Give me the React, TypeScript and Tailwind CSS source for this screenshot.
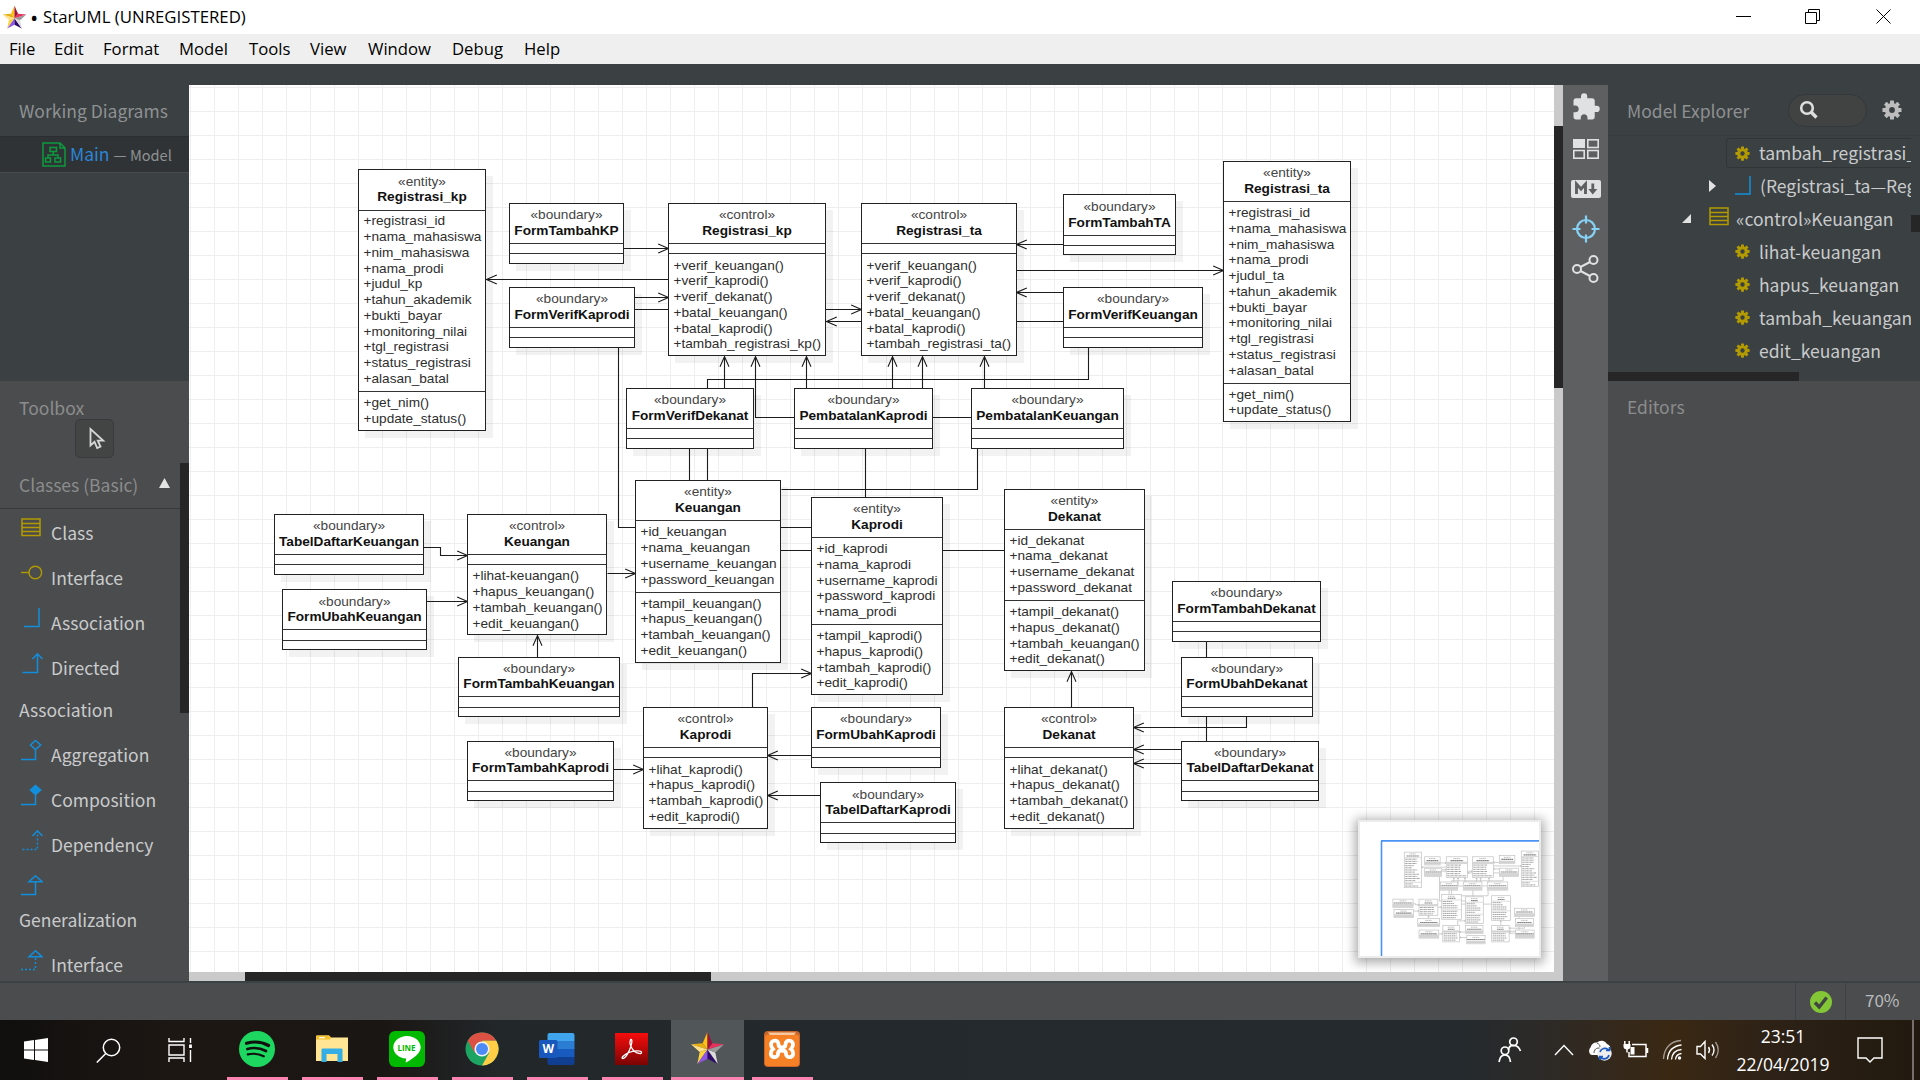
import React from "react";
import { MdExtension } from "react-icons/md";

type Box = {
  kind: string;
  name: string;
  x: number;
  y: number;
  r: number;
  b: number;
  s1: number;
  s2: number;
  head: [number, number];
  attrs?: string[];
  attrBase?: number;
  ops?: string[];
  opBase?: number;
};

type Edge = { pts: number[]; arrow?: boolean };

const OX = 189;
const OY = 85;
const PITCH = 15.75;
const ASCENT = 12;

const REG_ATTRS = (judul: string) => [
  "registrasi_id", "nama_mahasiswa", "nim_mahasiswa", "nama_prodi", judul, "tahun_akademik",
  "bukti_bayar", "monitoring_nilai", "tgl_registrasi", "status_registrasi", "alasan_batal",
];
const REG_OPS = (last: string) => [
  "verif_keuangan()", "verif_kaprodi()", "verif_dekanat()", "batal_keuangan()", "batal_kaprodi()", last,
];

const boundary = (
  name: string, x: number, r: number, y: number, s1: number, s2: number, b: number, head: [number, number],
): Box => ({ kind: "boundary", name, x, y, r, b, s1, s2, head });

const BOXES: Box[] = [
  { kind: "entity", name: "Registrasi_kp", x: 358, y: 169, r: 485, b: 430, s1: 210, s2: 391, head: [186, 201], attrs: REG_ATTRS("judul_kp"), attrBase: 225.9, ops: ["get_nim()", "update_status()"], opBase: 407.9 },
  boundary("FormTambahKP", 509, 623, 203, 243, 253, 263, [219, 235]),
  boundary("FormVerifKaprodi", 509, 634, 287, 327, 337, 347, [303, 319]),
  { kind: "control", name: "Registrasi_kp", x: 668, y: 203, r: 825, b: 355, s1: 243, s2: 253, head: [219, 235], ops: REG_OPS("tambah_registrasi_kp()"), opBase: 270.1 },
  { kind: "control", name: "Registrasi_ta", x: 861, y: 203, r: 1016, b: 355, s1: 243, s2: 253, head: [219, 235], ops: REG_OPS("tambah_registrasi_ta()"), opBase: 270.1 },
  boundary("FormTambahTA", 1063, 1175, 194, 235, 245, 254, [211, 227]),
  boundary("FormVerifKeuangan", 1063, 1202, 287, 327, 337, 347, [303, 319]),
  { kind: "entity", name: "Registrasi_ta", x: 1223, y: 161, r: 1350, b: 421, s1: 201, s2: 383, head: [177, 193], attrs: REG_ATTRS("judul_ta"), attrBase: 217.6, ops: ["get_nim()", "update_status()"], opBase: 399.1 },
  boundary("FormVerifDekanat", 626, 753, 388, 428, 438, 448, [404, 420]),
  boundary("PembatalanKaprodi", 794, 932, 388, 428, 438, 448, [404, 420]),
  boundary("PembatalanKeuangan", 971, 1123, 388, 428, 438, 448, [404, 420]),
  boundary("TabelDaftarKeuangan", 274, 423, 514, 554, 564, 574, [530, 546]),
  boundary("FormUbahKeuangan", 282, 426, 589, 629, 640, 649, [606, 621]),
  { kind: "control", name: "Keuangan", x: 467, y: 514, r: 606, b: 634, s1: 554, s2: 564, head: [530, 546], ops: ["lihat-keuangan()", "hapus_keuangan()", "tambah_keuangan()", "edit_keuangan()"], opBase: 580.9 },
  boundary("FormTambahKeuangan", 458, 619, 657, 696, 707, 716, [673, 688]),
  { kind: "entity", name: "Keuangan", x: 635, y: 480, r: 780, b: 662, s1: 520, s2: 592, head: [496, 512], attrs: ["id_keuangan", "nama_keuangan", "username_keuangan", "password_keuangan"], attrBase: 536.9, ops: ["tampil_keuangan()", "hapus_keuangan()", "tambah_keuangan()", "edit_keuangan()"], opBase: 608.1 },
  { kind: "entity", name: "Kaprodi", x: 811, y: 497, r: 942, b: 694, s1: 537, s2: 624, head: [513, 529], attrs: ["id_kaprodi", "nama_kaprodi", "username_kaprodi", "password_kaprodi", "nama_prodi"], attrBase: 553.6, ops: ["tampil_kaprodi()", "hapus_kaprodi()", "tambah_kaprodi()", "edit_kaprodi()"], opBase: 640.6 },
  { kind: "entity", name: "Dekanat", x: 1004, y: 489, r: 1144, b: 670, s1: 529, s2: 600, head: [505, 521], attrs: ["id_dekanat", "nama_dekanat", "username_dekanat", "password_dekanat"], attrBase: 545.1, ops: ["tampil_dekanat()", "hapus_dekanat()", "tambah_keuangan()", "edit_dekanat()"], opBase: 616.6 },
  boundary("FormTambahDekanat", 1172, 1320, 581, 621, 631, 641, [597, 613]),
  boundary("FormUbahDekanat", 1181, 1312, 657, 696, 707, 716, [673, 688]),
  boundary("TabelDaftarDekanat", 1181, 1318, 741, 780, 791, 800, [757, 772]),
  { kind: "control", name: "Dekanat", x: 1004, y: 707, r: 1133, b: 828, s1: 747, s2: 757, head: [723, 739], ops: ["lihat_dekanat()", "hapus_dekanat()", "tambah_dekanat()", "edit_dekanat()"], opBase: 774.1 },
  boundary("FormTambahKaprodi", 467, 613, 741, 780, 791, 800, [757, 772]),
  { kind: "control", name: "Kaprodi", x: 643, y: 707, r: 767, b: 828, s1: 747, s2: 757, head: [723, 739], ops: ["lihat_kaprodi()", "hapus_kaprodi()", "tambah_kaprodi()", "edit_kaprodi()"], opBase: 774.1 },
  boundary("FormUbahKaprodi", 811, 940, 707, 747, 757, 767, [723, 739]),
  boundary("TabelDaftarKaprodi", 820, 955, 782, 822, 833, 842, [799, 814]),
];

const EDGES: Edge[] = [
  { pts: [623, 248, 668, 248], arrow: true },
  { pts: [668, 279, 486, 279], arrow: true },
  { pts: [634, 297, 668, 297], arrow: true },
  { pts: [634, 309, 861, 309], arrow: true },
  { pts: [1063, 321, 826, 321], arrow: true },
  { pts: [1063, 244, 1016, 244], arrow: true },
  { pts: [1016, 270, 1223, 270], arrow: true },
  { pts: [1063, 292, 1016, 292], arrow: true },
  { pts: [618, 347, 618, 527, 812, 527] },
  { pts: [1088, 347, 1088, 379, 707, 379, 707, 481] },
  { pts: [724, 389, 724, 356], arrow: true },
  { pts: [971, 417, 755, 417, 755, 356], arrow: true },
  { pts: [806, 389, 806, 356], arrow: true },
  { pts: [892, 389, 892, 356], arrow: true },
  { pts: [922, 389, 922, 356], arrow: true },
  { pts: [984, 389, 984, 356], arrow: true },
  { pts: [689, 448, 689, 550, 1004, 550] },
  { pts: [865, 448, 865, 497] },
  { pts: [977, 448, 977, 489, 781, 489] },
  { pts: [423, 547, 440, 547, 440, 555, 467, 555], arrow: true },
  { pts: [426, 601, 467, 601], arrow: true },
  { pts: [537, 657, 537, 635], arrow: true },
  { pts: [607, 573, 635, 573], arrow: true },
  { pts: [613, 769, 643, 769], arrow: true },
  { pts: [752, 707, 752, 673, 811, 673], arrow: true },
  { pts: [811, 755, 767, 755], arrow: true },
  { pts: [820, 795, 767, 795], arrow: true },
  { pts: [1071, 707, 1071, 671], arrow: true },
  { pts: [1206, 641, 1206, 749, 1133, 749], arrow: true },
  { pts: [1246, 716, 1246, 727, 1133, 727], arrow: true },
  { pts: [1181, 763, 1133, 763], arrow: true },
];

function edgePath({ pts, arrow }: Edge) {
  const p: [number, number][] = [];
  for (let i = 0; i < pts.length; i += 2) p.push([pts[i] - OX + 0.5, pts[i + 1] - OY + 0.5]);
  let d = "M" + p.map((q) => q.join(" ")).join("L");
  if (arrow) {
    const [x, y] = p[p.length - 1];
    const [px, py] = p[p.length - 2];
    const ux = Math.sign(px - x);
    const uy = Math.sign(py - y);
    const L = 10.3;
    const W = 4.5;
    d += `M${x + ux * L + uy * W} ${y + uy * L + ux * W}L${x} ${y}L${x + ux * L - uy * W} ${y + uy * L - ux * W}`;
  }
  return d;
}

function Edges() {
  return (
    <svg className="absolute inset-0" width="1365" height="887" fill="none" stroke="#1c1c1c" strokeWidth="1.1">
      {EDGES.map((e, i) => (
        <path key={i} d={edgePath(e)} />
      ))}
    </svg>
  );
}

function Members({ items, base, top }: { items: string[]; base: number; top: number }) {
  const at = (k: number) => Math.floor(base + PITCH * k);
  return (
    <div className="pl-[4.5px]" style={{ paddingTop: at(0) - ASCENT - top - 1 }}>
      {items.map((m, k) => (
        <div key={m} className="whitespace-nowrap" style={{ height: at(k + 1) - at(k) }}>+{m}</div>
      ))}
    </div>
  );
}

function ClassNode({ box }: { box: Box }) {
  const { kind, name, x, y, r, b, s1, s2, head, attrs, attrBase = 0, ops, opBase = 0 } = box;
  return (
    <div
      className="absolute flex flex-col border border-[#222] bg-white text-[13.65px] leading-[15px] text-[#2e2e2e] shadow-[7px_7px_0_rgba(0,0,0,0.05)]"
      style={{ left: x - OX, top: y - OY, width: r - x + 1, height: b - y + 1 }}
    >
      <div className="shrink-0 border-b border-[#333] text-center" style={{ height: s1 - y, paddingTop: head[0] - ASCENT - y - 1 }}>
        <div className="text-[#444]" style={{ height: head[1] - head[0] }}>«{kind}»</div>
        <div className="-mx-2 font-bold whitespace-nowrap text-[#111]">{name}</div>
      </div>
      <div className="shrink-0 border-b border-[#333]" style={{ height: s2 - s1 }}>
        {attrs && <Members items={attrs} base={attrBase} top={s1} />}
      </div>
      {ops && <Members items={ops} base={opBase} top={s2} />}
    </div>
  );
}

function MiniBox({ box }: { box: Box }) {
  const x = box.x - OX;
  const w = box.r - box.x;
  const y = box.y - OY;
  const rows: [number, number][] = [];
  (box.attrs ?? []).forEach((a, i) => rows.push([box.s1 - OY + 11 + i * PITCH, a.length]));
  (box.ops ?? []).forEach((a, i) => rows.push([box.s2 - OY + 11 + i * PITCH, a.length]));
  return (
    <g>
      <rect x={x} y={y} width={w} height={box.b - box.y} fill="#fff" stroke="#c0c0c0" strokeWidth="5" />
      {!box.attrs && <rect x={x} y={box.s1 - OY} width={w} height={box.s2 - box.s1} fill="#dadada" />}
      {!box.ops && <rect x={x} y={box.s1 - OY} width={w} height={box.b - box.s1} fill="#dcdcdc" />}
      <path d={`M${x} ${box.s1 - OY}h${w}M${x} ${box.s2 - OY}h${w}`} stroke="#c4c4c4" strokeWidth="4" />
      <path d={`M${x + w / 2 - 25} ${y + 13}h50`} stroke="#aaa" strokeWidth="6" strokeDasharray="9 3" />
      <path d={`M${x + w / 2 - box.name.length * 3.6} ${y + 28}h${box.name.length * 7.2}`} stroke="#868686" strokeWidth="8" strokeDasharray="13 2" />
      {rows.map(([ry, n], i) => (
        <path key={i} d={`M${x + 7} ${ry}h${n * 6.4}`} stroke="#a0a0a0" strokeWidth="7" strokeDasharray="15 2 9 3" />
      ))}
    </g>
  );
}

function MiniMap() {
  return (
    <div className="absolute top-[735px] left-[1169px] h-[138px] w-[183px] overflow-hidden border-2 border-[#ececec] bg-white shadow-[0_2px_10px_3px_rgba(0,0,0,0.32)]">
      <svg width="179" height="134" viewBox="0 0 179 134" fill="none">
        <path d="M21.5 134V19" stroke="#4a93f5" strokeWidth="1.6" />
        <path d="M21 18.9H179" stroke="#4a93f5" strokeWidth="1.6" />
        <g transform="translate(21.4 18.7) scale(0.1353 0.1362)">
          {EDGES.map((e, i) => (
            <path key={i} d={edgePath(e)} stroke="#b8b8b8" strokeWidth="5" />
          ))}
          {BOXES.map((b, i) => (
            <MiniBox key={i} box={b} />
          ))}
        </g>
      </svg>
    </div>
  );
}

function Star({ size }: { size: number }) {
  return (
    <svg width={size} height={size} viewBox="0 0 36 36">
      <path d="M18 19 18 1 13 12.500z" fill="#fdc20f" />
      <path d="M18 19 13 12.500 1 13.500z" fill="#e9ae12" />
      <path d="M18 19 1 13.500 10 21.500z" fill="#ffe08a" />
      <path d="M18 19 10 21.500 7.500 34z" fill="#fbd53a" />
      <path d="M18 19 7.500 34 18 28.500z" fill="#8f55e8" />
      <path d="M18 19 18 28.500 28.500 34z" fill="#2e0a68" />
      <path d="M18 19 28.500 34 26 22z" fill="#dcdcdc" />
      <path d="M18 19 26 22 35 13.500z" fill="#9a9a9a" />
      <path d="M18 19 35 13.500 23 12.500z" fill="#e8305c" />
      <path d="M18 19 23 12.500 18 1z" fill="#a0103c" />
    </svg>
  );
}

function Gear({ size, color }: { size: number; color: string }) {
  return (
    <svg width={size} height={size} viewBox="-10 -10 20 20" className="shrink-0">
      {[0, 45, 90, 135].map((a) => (
        <rect key={a} x="-2" y="-9.500" width="4" height="19" rx="0.600" fill={color} transform={`rotate(${a})`} />
      ))}
      <circle r="5" fill="none" stroke={color} strokeWidth="4.200" />
      <circle r="2.900" fill="#3a3f42" />
    </svg>
  );
}

function ClassIcon() {
  return (
    <svg width="20" height="19" viewBox="0 0 20 19" fill="none" stroke="#b39a00" strokeWidth="1.500" className="shrink-0">
      <rect x="1" y="1" width="18" height="16.500" />
      <path d="M1 5.500h18M1 9.500h18M1 13.500h18" />
    </svg>
  );
}

type ToolKind = "class" | "interface" | "assoc" | "directed" | "aggr" | "comp" | "dep" | "gen" | "real";

function ToolIcon({ kind }: { kind: ToolKind }) {
  if (kind === "class") return <ClassIcon />;
  if (kind === "interface")
    return (
      <svg width="22" height="20" viewBox="0 0 22 20" fill="none" stroke="#b39a00" strokeWidth="1.400">
        <path d="M0 9.500h8" />
        <circle cx="14.300" cy="9.500" r="6.300" />
      </svg>
    );
  const dashed = kind === "dep" || kind === "real";
  return (
    <svg width="22" height="22" viewBox="0 0 22 22" fill="none" stroke="#128fdc" strokeWidth="1.500">
      {kind === "assoc" && <path d="M3 19.500h15V1" />}
      {(kind === "directed" || kind === "dep") && (
        <>
          <path d="M1.500 20.500h15V3" strokeDasharray={dashed ? "2 2" : undefined} />
          <path d="M11.500 7 16.500 1.800 21.500 7" />
        </>
      )}
      {(kind === "aggr" || kind === "comp") && (
        <>
          <path d="M0 20.500h14.500V10.500" />
          <path d="M14.500 1.500 19.700 6 14.500 10.500 9.500 6z" fill={kind === "comp" ? "#128fdc" : "none"} />
        </>
      )}
      {(kind === "gen" || kind === "real") && (
        <>
          <path d="M0 20.500h14.500V8" strokeDasharray={dashed ? "2 2" : undefined} />
          <path d="M14.500 1.800 21 7.700H8z" />
        </>
      )}
    </svg>
  );
}

const TOOLS: { kind: ToolKind; label: string; wrap?: string }[] = [
  { kind: "class", label: "Class" },
  { kind: "interface", label: "Interface" },
  { kind: "assoc", label: "Association" },
  { kind: "directed", label: "Directed", wrap: "Association" },
  { kind: "aggr", label: "Aggregation" },
  { kind: "comp", label: "Composition" },
  { kind: "dep", label: "Dependency" },
  { kind: "gen", label: "", wrap: "Generalization" },
  { kind: "real", label: "Interface" },
];

function LeftPanel() {
  return (
    <aside className="flex w-[189px] shrink-0 flex-col">
      <div className="h-[296px] shrink-0 bg-[#3b4043]">
        <div className="flex h-[51px] items-center pl-[19px] text-[17.5px] text-[#8e9192]">
          <span className="pt-[2px]">Working Diagrams</span>
        </div>
        <div className="flex h-[37px] items-center border-t border-b border-t-[#2b2e30] border-b-[#4a4d50] bg-[#2f3335] pl-[42px]">
          <svg width="24" height="25" viewBox="0 0 24 25" fill="none" stroke="#0c9b3e" strokeWidth="1.500">
            <path d="M1 1h17l5 5v18H1zM18 1v5h5" />
            <path d="M8 5.500h6.500v4H8zM3.500 16h5v4h-5zM13 16h5.500v4H13zM11.200 9.500v3.500M6 16v-3h10v3" />
          </svg>
          <span className="-mt-px ml-1 text-[17.5px] text-[#2a86d8]">Main</span>
          <span className="ml-1 text-[14.600px] text-[#8e9192]">— Model</span>
        </div>
      </div>
      <div className="flex min-h-0 flex-1 flex-col overflow-hidden bg-[#4b4c4e]">
        <div className="flex h-[38px] shrink-0 items-end pl-[19px]">
          <span className="-mb-[2px] text-[17.5px] leading-[26px] text-[#8b8c8d]">Toolbox</span>
        </div>
        <div className="ml-[75px] flex h-[39px] w-[39px] shrink-0 items-center justify-center rounded-[5px] border border-[#393b3b] bg-[#434545]">
          <svg width="18" height="24" viewBox="0 0 18 24" className="ml-[4px]" fill="none" stroke="#d6d8d8" strokeWidth="1.800">
            <path d="M2.500 2v16.500l4-3.700 2.700 6.200 3.300-1.500-2.700-5.800h5.400z" />
          </svg>
        </div>
        <div className="flex min-h-0 flex-1">
          <div className="w-[180px]">
            <div className="mb-px flex h-[51px] items-center justify-between border-b border-[#38393b] pr-[10px] pl-[19px]">
              <span className="mt-[5px] text-[17.5px] text-[#8b8c8d]">Classes (Basic)</span>
              <svg width="11" height="10" viewBox="0 0 11 10">
                <path d="M5.500 0 11 10H0z" fill="#e4e4e4" />
              </svg>
            </div>
            <div className="text-[17.5px] text-[#c9cbcc]">
              {TOOLS.map((t, i) => (
                <div key={i}>
                  <div className={t.label ? "flex h-[45px] items-center pl-[21px]" : "flex h-[32px] items-center pl-[21px]"}>
                    <span className={t.label ? "-mt-[10px] w-[30px]" : "mt-[4px] w-[30px]"}>
                      <ToolIcon kind={t.kind} />
                    </span>
                    <span className="pt-px">{t.label}</span>
                  </div>
                  {t.wrap && <div className={t.label ? "h-[42px] pl-[19px] leading-[40px]" : "h-[43px] pl-[19px] leading-[42px]"}>{t.wrap}</div>}
                </div>
              ))}
            </div>
          </div>
          <div className="mt-[5px] h-[250px] w-[9px] bg-[#262626]" />
        </div>
      </div>
    </aside>
  );
}

function Canvas() {
  return (
    <main className="flex w-[1374px] shrink-0 flex-col bg-[#cacaca]">
      <div className="flex h-[887px]">
        <div className="relative w-[1365px] overflow-hidden bg-white bg-[linear-gradient(to_right,#eeeeee_1px,transparent_1px),linear-gradient(to_bottom,#eeeeee_1px,transparent_1px)] bg-[size:24px_24px] bg-[position:1px_2px] font-['Liberation_Sans',sans-serif]">
          <Edges />
          {BOXES.map((b, i) => (
            <ClassNode key={i} box={b} />
          ))}
          <MiniMap />
        </div>
        <div className="mt-[41px] h-[262px] w-[9px] bg-[#262626]" />
      </div>
      <div className="ml-[56px] h-[9px] w-[466px] bg-[#262626]" />
    </main>
  );
}

function ToolStrip() {
  return (
    <div className="flex w-[45px] shrink-0 flex-col items-center bg-[#5e5f61] pt-[7px] text-[#dfe1e2]">
      <div className="flex h-[34px] items-start pl-px"><MdExtension size={30} /></div>
      <div className="flex h-[46px] items-center">
        <svg width="26" height="20" viewBox="0 0 26 20" fill="none" stroke="currentColor" strokeWidth="1.600">
          <rect x="0" y="0" width="12" height="9" fill="currentColor" stroke="none" />
          <rect x="14.800" y="0.800" width="10.400" height="7.700" />
          <rect x="0.800" y="11.500" width="10.400" height="7.700" />
          <rect x="14.800" y="11.500" width="10.400" height="7.700" />
        </svg>
      </div>
      <div className="flex h-[34px] items-center">
        <svg width="30" height="18" viewBox="0 0 30 18">
          <rect width="30" height="18" rx="2" fill="currentColor" />
          <path d="M5.500 14V4l4.500 5 4.500-5v10" fill="none" stroke="#5e5f61" strokeWidth="2.900" />
          <path d="M21.800 3.500v7" stroke="#5e5f61" strokeWidth="2.800" />
          <path d="M17.300 9h9l-4.500 5.600z" fill="#5e5f61" />
        </svg>
      </div>
      <div className="flex h-[46px] items-center">
        <svg width="28" height="28" viewBox="-14 -14 28 28" fill="none" stroke="#86d2f6" strokeWidth="2.200">
          <circle r="9" />
          <path d="M0-13.500v8M0 13.500v-8M-13.500 0h8M13.500 0h-8" />
        </svg>
      </div>
      <div className="flex h-[34px] items-center">
        <svg width="27" height="28" viewBox="0 0 27 28" fill="none" stroke="currentColor" strokeWidth="2">
          <circle cx="5" cy="14" r="4" />
          <circle cx="21.500" cy="5" r="4" />
          <circle cx="21.500" cy="23" r="4" />
          <path d="M8.500 12 18 7M8.500 16 18 21" />
        </svg>
      </div>
    </div>
  );
}

function TreeOp({ name }: { name: string }) {
  return (
    <div className="flex h-[33px] items-center pl-[127px] whitespace-nowrap">
      <Gear size={15} color="#b39a00" />
      <span className="ml-[9px] pt-[2px]">{name}</span>
    </div>
  );
}

function RightPanel() {
  return (
    <aside className="flex w-[312px] flex-col bg-[#4b4c4e] text-[17.5px] text-[#c9cbcc]">
      <div className="h-[296px] bg-[#3b4043]">
        <div className="flex h-[51px] items-center border-b border-[#373b3d] pl-[19px]">
          <span className="w-[161px] pt-[2px] text-[#8e9192]">Model Explorer</span>
          <div className="flex h-[33px] w-[79px] items-center rounded-full border border-[#34383a] bg-[#414343] pl-[10px]">
            <svg width="20" height="20" viewBox="0 0 20 20" fill="none" stroke="#dedede">
              <circle cx="8" cy="8" r="5.800" strokeWidth="2.600" />
              <path d="m12.500 12.500 5 5" strokeWidth="3.400" />
            </svg>
          </div>
          <div className="ml-[15px]">
            <Gear size={20} color="#bdbdbd" />
          </div>
        </div>
        <div className="flex h-[236px]">
          <div className="w-[303px] overflow-hidden">
            <div className="mt-[2px] ml-[118px] flex h-[30px] items-center rounded-l-[4px] border border-r-0 border-[#313537] pl-[8px] whitespace-nowrap">
              <Gear size={15} color="#b39a00" />
              <span className="ml-[9px]">tambah_registrasi_ta</span>
            </div>
            <div className="mt-[1px] flex h-[33px] items-center pl-[101px] whitespace-nowrap">
              <svg width="7" height="12" viewBox="0 0 7 12" className="shrink-0"><path d="M0 0 7 6 0 12z" fill="#e2e2e2" /></svg>
              <svg width="16" height="19" viewBox="0 0 16 19" className="ml-[19px] shrink-0" fill="none" stroke="#128fdc" strokeWidth="1.500">
                <path d="M0 18h15V0" />
              </svg>
              <span className="ml-[9px] pt-[2px]">(Registrasi_ta—Registrasi_kp)</span>
            </div>
            <div className="flex h-[33px] items-center pl-[74px] whitespace-nowrap">
              <svg width="9" height="9" viewBox="0 0 9 9" className="shrink-0"><path d="M9 0v9H0z" fill="#e2e2e2" /></svg>
              <span className="-mt-1 ml-[18px] w-[27px]"><ClassIcon /></span>
              <span className="pt-[2px]">«control»Keuangan</span>
            </div>
            <TreeOp name="lihat-keuangan" />
            <TreeOp name="hapus_keuangan" />
            <TreeOp name="tambah_keuangan" />
            <TreeOp name="edit_keuangan" />
          </div>
          <div className="mt-[79px] h-[17px] w-[9px] bg-[#262626]" />
        </div>
        <div className="h-[9px] w-[191px] bg-[#262626]" />
      </div>
      <div className="flex h-[52px] items-center pl-[19px] text-[#8b8c8d]">
        <span className="pt-px">Editors</span>
      </div>
    </aside>
  );
}

const MENU: [string, string][] = [
  ["File", "w-[45px]"],
  ["Edit", "w-[49px]"],
  ["Format", "w-[76px]"],
  ["Model", "w-[70px]"],
  ["Tools", "w-[61px]"],
  ["View", "w-[58px]"],
  ["Window", "w-[84px]"],
  ["Debug", "w-[72px]"],
  ["Help", "w-[50px]"],
];

function TaskButton({ children, active }: { children: React.ReactNode; active?: boolean }) {
  return (
    <div className="flex h-full w-[75px] flex-col items-center">
      <div className={active ? "flex w-[73px] flex-1 items-center justify-center bg-[#515658]" : "flex w-[73px] flex-1 items-center justify-center pr-[2px]"}>
        {children}
      </div>
      <div className={active ? "h-[3px] w-[73px] bg-[#fb83b1]" : "h-[3px] w-[61px] bg-[#fb83b1]"} />
    </div>
  );
}

function Taskbar() {
  return (
    <footer className="flex h-[60px] shrink-0 items-center bg-[linear-gradient(to_right,#100f0e_0%,#1d1713_9%,#1a1613_20%,#22272a_26%,#23292c_45%,#242a2e_76%,#2c2a28_80%,#3a2813_87%,#2e2217_92%,#21190f_100%)] font-['Open_Sans',sans-serif] text-white">
      <div className="flex w-[72px] justify-center">
        <svg width="24" height="24" viewBox="0 0 24 24" fill="#fff">
          <path d="M0 3.400 10 2v9.500H0zM11 1.900 24 0v11.500H11zM0 12.500h10V22L0 20.600zM11 12.500h13V24L11 22.100z" />
        </svg>
      </div>
      <div className="flex w-[72px] justify-center">
        <svg width="25" height="25" viewBox="0 0 25 25" fill="none" stroke="#fff" strokeWidth="1.500">
          <circle cx="15.500" cy="9.500" r="8.200" />
          <path d="M9.800 15.500.8 24.500" />
        </svg>
      </div>
      <div className="flex w-[72px] justify-center">
        <svg width="24" height="24" viewBox="0 0 24 24" fill="none" stroke="#fff" strokeWidth="1.400">
          <path d="M1 0v3.500h15V0M1 24v-4h15v4M1 7h15v10H1zM22.500 0v5M22.500 12v12" />
          <path d="M22.500 6.500v3.500" strokeWidth="2.800" />
        </svg>
      </div>
      <div className="ml-[4px] flex h-full">
        <TaskButton>
          <svg width="36" height="36" viewBox="0 0 36 36" fill="none" stroke="#10110f" strokeLinecap="round">
            <circle cx="18" cy="18" r="18" fill="#1ed760" stroke="none" />
            <path d="M7.500 12.300c7-2 15.500-1.500 22 2.200" strokeWidth="3.200" />
            <path d="M8.300 18c6.500-1.800 13-1 18.700 2" strokeWidth="2.700" />
            <path d="M8.800 23.400c5.700-1.300 11-.6 16 1.900" strokeWidth="2.200" />
          </svg>
        </TaskButton>
        <TaskButton>
          <svg width="32" height="28" viewBox="0 0 32 28">
            <path d="M0 1.500Q0 .5 1 .5h12l2 2h17V26H0z" fill="#ffe594" />
            <path d="M0 4.500V1.500Q0 .5 1 .5h12l2 2-1 2z" fill="#f6c12f" />
            <path d="M3 2.700h6" stroke="#fff" strokeWidth="1.200" />
            <path d="M5.500 27V14.500q0-1 1-1H25.500q1 0 1 1V27h-5v-8h-11v8z" fill="#35aee6" />
          </svg>
        </TaskButton>
        <TaskButton>
          <div className="relative h-[36px] w-[36px] rounded-[6px] bg-[#00b900]">
            <svg width="36" height="36" viewBox="0 0 36 36">
              <path d="M18 5c7.600 0 13.700 5 13.700 11.300 0 5.200-5.500 10.200-14.200 15-.6.300-.9.100-.8-.6l.5-3.100C10 27.300 4.300 22.500 4.300 16.300 4.300 10 10.400 5 18 5z" fill="#fff" />
            </svg>
            <span className="absolute inset-x-0 top-[11px] text-center text-[8px] leading-[11px] font-bold text-[#00b900]">LINE</span>
          </div>
        </TaskButton>
        <TaskButton>
          <svg width="34" height="34" viewBox="-17 -17 34 34">
            <circle r="16.500" fill="#1da462" />
            <path d="M-14.300-8.300A16.500 16.500 0 0 1 14.300-8.250L0-8.250-7.100 4.100z" fill="#dd5144" />
            <path d="M14.300-8.250A16.500 16.500 0 0 1 0 16.500L7.100 4.100 0-8.250z" fill="#ffcd46" />
            <circle r="7.600" fill="#f1f1f1" />
            <circle r="6" fill="#4c8bf5" />
          </svg>
        </TaskButton>
        <TaskButton>
          <svg width="36" height="34" viewBox="0 0 36 34">
            <path d="M8.500 3q0-2 2-2h23q2 0 2 2v6h-27z" fill="#41a5ee" />
            <path d="M8.500 9h27v8h-27z" fill="#2b7cd3" />
            <path d="M8.500 17h27v8h-27z" fill="#185abd" />
            <path d="M8.500 25h27v6q0 2-2 2h-23q-2 0-2-2z" fill="#103f91" />
            <rect x="0" y="8" width="18.500" height="18" rx="1.500" fill="#1858bd" />
            <text x="9.200" y="21.300" textAnchor="middle" fontSize="12" fontWeight="700" fill="#fff">W</text>
          </svg>
        </TaskButton>
        <TaskButton>
          <div className="flex h-[32px] w-[33px] items-center justify-center bg-[linear-gradient(to_bottom,#f80c0c,#7a0404)]">
            <svg width="22" height="22" viewBox="0 0 22 22" fill="none" stroke="#fff" strokeWidth="1.300">
              <path d="M9.500 1.500c2.500-1 1 5 .2 7.500C8.200 13.500 4.500 20.500 2 20.500c-3 0 2-4.500 6-6 4-1.600 12-2.500 12.500-.3.500 2.500-4.500 1-6.500-.5-3-2.500-6.500-7.500-4.500-12.200z" />
            </svg>
          </div>
        </TaskButton>
        <TaskButton active>
          <Star size={35} />
        </TaskButton>
        <TaskButton>
          <svg width="36" height="36" viewBox="0 0 36 36">
            <rect width="36" height="36" rx="4" fill="#c9652a" />
            <rect x="1" y="3.500" width="34" height="31.500" rx="3" fill="#f58025" />
            <path d="M4 1.500h28l-2 2.500H6z" fill="#f7c9a0" />
            <path d="M14.500 13.500c0-5.500-7.500-5-7.500 0 0 2 .8 3.200 2 4.500-1.600 1.300-2.200 2.500-2.200 4.500 0 5 7.200 4.800 7.200.3 0-2.300 1.500-3.300 4-3.300s4 1 4 3.300c0 4.500 7.200 4.700 7.200-.3 0-2-.6-3.200-2.200-4.500 1.200-1.300 2-2.500 2-4.500 0-5-7.500-5.500-7.500 0 0 2-1 2.800-3.500 2.800s-3.500-.8-3.500-2.800z" fill="none" stroke="#fff" strokeWidth="3.800" />
          </svg>
        </TaskButton>
      </div>
      <div className="ml-[678px] flex items-center">
        <svg width="24" height="26" viewBox="0 0 24 26" fill="none" stroke="#fff" strokeWidth="1.700">
          <circle cx="15.500" cy="4.800" r="3.800" />
          <path d="M10.500 13c.5-6 9-6.500 12 1" />
          <circle cx="7" cy="13.800" r="3.800" />
          <path d="M1 25c1.500-9.500 10.500-9.500 11.500 0" />
        </svg>
        <svg width="20" height="12" viewBox="0 0 20 12" className="ml-[32px]" fill="none" stroke="#fff" strokeWidth="1.400">
          <path d="m1 11 9-9.500 9 9.500" />
        </svg>
        <svg width="26" height="22" viewBox="0 0 26 22" className="ml-[13px]">
          <path d="M3.500 15.500a5 5 0 0 1 0-7A6 6 0 0 1 10 3.500 6.500 6.500 0 0 1 20 5a5 5 0 0 1 3 6v5H5z" fill="#fff" />
          <path d="M7 14c0-5 5-6 7-4M10 4c2 1 3 2 3 4" fill="none" stroke="#555" strokeWidth="1" />
          <circle cx="17.500" cy="14.500" r="7.200" fill="#eee" />
          <path d="M13 13a5 5 0 0 1 8.500-2M22.500 8v3.500H19M22 16a5 5 0 0 1-8.500 2.200M12.700 21v-3.500H16" fill="none" stroke="#1c5bbf" strokeWidth="1.700" />
        </svg>
        <svg width="26" height="20" viewBox="0 0 26 20" className="ml-[10px]" fill="none" stroke="#fff" strokeWidth="1.500">
          <path d="M9 4.500h14v12H6V12M24.500 8v5" />
          <path d="M7.500 7h4v7.500h-4z" fill="#fff" stroke="none" />
          <path d="M1.800 1v3M6.200 1v3M4 9v3.500" />
          <path d="M.5 4h7v2.500C7.500 8.500 6 9.500 4 9.500S.5 8.500.5 6.500z" fill="#fff" stroke="none" />
        </svg>
        <svg width="22" height="22" viewBox="0 0 22 22" className="ml-[13px]" fill="none" stroke="#fff" strokeWidth="1.300">
          <path d="M1.500 20C2 9 9 2 19 1.500" opacity=".55" />
          <path d="M5.500 20.500C6 12.500 11 7 19.500 6M9.500 20.500c.5-5.500 4-9.500 10-10M13.500 20.500c.3-3 2.500-5.500 6-6" />
          <circle cx="17.500" cy="19" r="1.700" fill="#fff" stroke="none" />
        </svg>
        <svg width="24" height="20" viewBox="0 0 24 20" className="ml-[12px]" fill="none" stroke="#fff" strokeWidth="1.400">
          <path d="M1 6.500h3.500L9 1.500v17L4.500 14H1z" />
          <path d="M12.500 7q2 3 0 6M16 4.500q4 5.500 0 11" />
          <path d="M19.500 2q5.500 8 0 16" opacity=".5" />
        </svg>
      </div>
      <div className="ml-[14px] flex w-[98px] flex-col items-center text-[17.500px] leading-[28px]">
        <span>23:51</span>
        <span>22/04/2019</span>
      </div>
      <svg width="26" height="26" viewBox="0 0 26 26" className="ml-[25px]" fill="none" stroke="#fff" strokeWidth="1.400">
        <path d="M1 1h24v20h-8l-4 4-4-4H1z" />
      </svg>
      <div className="ml-auto h-full w-[8px] border-l-2 border-[#77706a]" />
    </footer>
  );
}

export default function App() {
  return (
    <div className="flex h-[1080px] w-[1920px] flex-col overflow-hidden bg-[#3b4043] font-['Noto_Sans_CJK_SC',sans-serif]">
      <header className="flex h-[34px] shrink-0 items-center justify-between bg-white pl-[2px] font-['Open_Sans',sans-serif] text-[16.800px] text-black">
        <div className="flex items-center">
          <Star size={25} />
          <span className="ml-[3px] w-[8px] text-[22px] leading-[24px]">•</span>
          <span className="ml-[5px]">StarUML (UNREGISTERED)</span>
        </div>
        <svg width="184" height="34" viewBox="1736 0 184 34" fill="none" stroke="#000" strokeWidth="1">
          <path d="M1736 16.500h15" />
          <path d="M1805.500 12.500h11v11h-11zM1808.500 12.500v-3h11v11h-3" />
          <path d="m1876.500 9.500 14 14M1890.500 9.500l-14 14" />
        </svg>
      </header>
      <nav className="flex h-[30px] shrink-0 items-center bg-[#efefef] pb-px pl-[9px] font-['Open_Sans',sans-serif] text-[16.700px] text-black">
        {MENU.map(([label, width]) => (
          <span key={label} className={width}>{label}</span>
        ))}
      </nav>
      <div className="h-[21px] shrink-0 bg-[#3b4043]" />
      <div className="flex h-[896px] shrink-0">
        <LeftPanel />
        <Canvas />
        <ToolStrip />
        <RightPanel />
      </div>
      <div className="flex h-[39px] shrink-0 items-stretch justify-end border-t-2 border-[#3a4244] bg-[#4b4c4e] text-[17px] text-[#b9bbbc]">
        <div className="flex w-[50px] items-center justify-center border-l border-[#3a4244]">
          <svg width="22" height="22" viewBox="0 0 22 22">
            <circle cx="11" cy="11" r="11" fill="#83c636" />
            <path d="m5 11.500 4.200 4.500 7.500-9.500" fill="none" stroke="#3f4540" strokeWidth="3.400" />
          </svg>
        </div>
        <div className="flex w-[75px] items-center border-l border-[#3a4244] pb-[3px] pl-[19px]">
          <span>70%</span>
        </div>
      </div>
      <Taskbar />
    </div>
  );
}
